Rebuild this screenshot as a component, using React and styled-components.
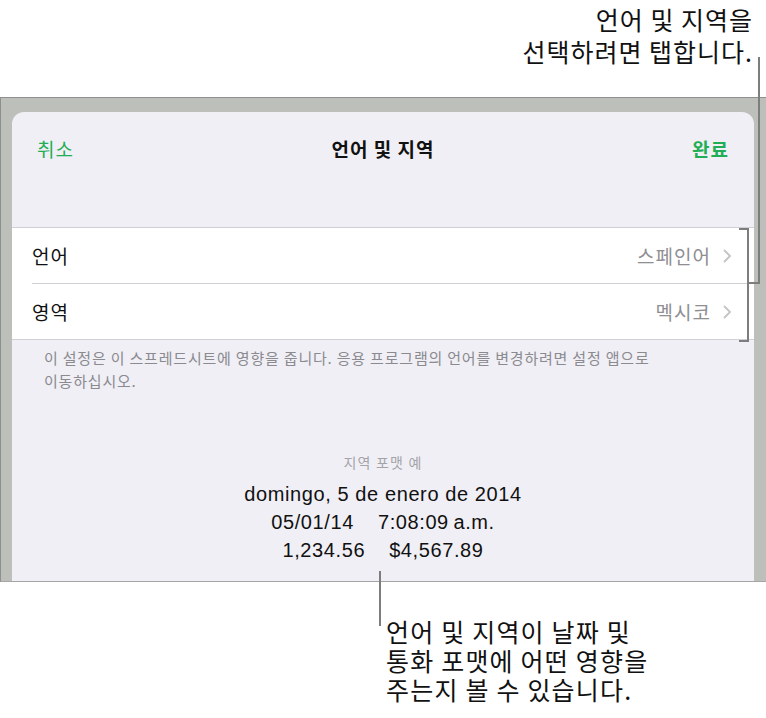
import React from "react";
import styled, { createGlobalStyle } from "styled-components";

const KR = `"Noto Sans CJK KR", "Noto Sans", sans-serif`;
const LATIN = `"Liberation Sans", "Noto Sans CJK KR", sans-serif`;
const GREEN = "#1fae55";
const LINE = "#7d7d7d";

const GlobalStyle = createGlobalStyle`
  html, body {
    margin: 0;
    padding: 0;
    background: #ffffff;
  }
  body {
    font-family: ${KR};
    color: #111;
  }
`;

const settings = [
  { label: "언어", value: "스페인어" },
  { label: "영역", value: "멕시코" },
];

const Chevron = () => (
  <svg width="9" height="14" viewBox="0 0 9 14">
    <polyline
      points="1.5,1.5 7,7 1.5,12.5"
      fill="none"
      stroke="#c4c4c8"
      strokeWidth="1.8"
      strokeLinecap="round"
      strokeLinejoin="round"
    />
  </svg>
);

const App = () => {
  return (
    <Page>
      <GlobalStyle />
      <TopNote>
        언어 및 지역을
        <br />
        선택하려면 탭합니다.
      </TopNote>

      <Frame>
        <Sheet>
          <NavBar>
            <NavButton>취소</NavButton>
            <NavTitle>언어 및 지역</NavTitle>
            <NavButton bold>완료</NavButton>
          </NavBar>

          <Group>
            {settings.map((item, index) => (
              <Row key={item.label} last={index === settings.length - 1}>
                <RowLabel>{item.label}</RowLabel>
                <RowValue>
                  {item.value}
                  <Chevron />
                </RowValue>
              </Row>
            ))}
          </Group>

          <FooterNote>
            이 설정은 이 스프레드시트에 영향을 줍니다. 응용 프로그램의 언어를 변경하려면 설정 앱으로
            <br />
            이동하십시오.
          </FooterNote>

          <Example>
            <ExampleCaption>지역 포맷 예</ExampleCaption>
            <ExampleLine>domingo, 5 de enero de 2014</ExampleLine>
            <ExampleLine>
              <span>05/01/14</span>
              <span>7:08:09{"\u2009"}a.m.</span>
            </ExampleLine>
            <ExampleLine>
              <span>1,234.56</span>
              <span>$4,567.89</span>
            </ExampleLine>
          </Example>
        </Sheet>
      </Frame>

      <BottomNote>
        언어 및 지역이 날짜 및
        <br />
        통화 포맷에 어떤 영향을
        <br />
        주는지 볼 수 있습니다.
      </BottomNote>

      {/* callout lines drawn over the screenshot */}
      <Bracket />
      <Leader style={{ left: 747, top: 282, width: 13, height: 2 }} />
      <Leader style={{ left: 758, top: 57, width: 2, height: 227 }} />
      <Leader style={{ left: 379, top: 571, width: 2, height: 55 }} />
    </Page>
  );
};

export default App;

const Page = styled.div`
  position: relative;
  width: 766px;
  height: 718px;
  overflow: hidden;
`;

const TopNote = styled.div`
  height: 97px;
  box-sizing: border-box;
  padding: 3px 13px 0 0;
  text-align: right;
  font-family: ${KR};
  font-size: 25px;
  line-height: 32px;
  letter-spacing: 1px;
  color: #111;
`;

const Frame = styled.div`
  height: 485px;
  box-sizing: border-box;
  padding: 14px 12px 0 11px;
  background: #bdbfbb;
  border-top: 1px solid #8f908e;
  border-left: 1px solid #8f908e;
  border-bottom: 1px solid #a6a7a5;
  display: flex;
`;

const Sheet = styled.div`
  flex: 1;
  background: #f0eff5;
  border-radius: 12px 12px 0 0;
  display: flex;
  flex-direction: column;
`;

const NavBar = styled.div`
  height: 72px;
  display: grid;
  grid-template-columns: 1fr auto 1fr;
  align-items: center;
  padding: 0 25px;
`;

const NavButton = styled.div`
  font-family: ${KR};
  font-size: 19px;
  letter-spacing: 1px;
  font-weight: ${(p) => (p.bold ? 700 : 400)};
  color: ${GREEN};
  justify-self: ${(p) => (p.bold ? "end" : "start")};
`;

const NavTitle = styled.div`
  font-family: ${KR};
  font-size: 19px;
  letter-spacing: 1px;
  font-weight: 700;
  color: #111;
`;

const Group = styled.div`
  margin-top: 43px;
  background: #ffffff;
  border-top: 1px solid #d0d0d5;
  border-bottom: 1px solid #d0d0d5;
  padding-left: 20px;
`;

const Row = styled.div`
  height: 55px;
  display: flex;
  align-items: center;
  justify-content: space-between;
  padding-right: 22px;
  border-bottom: ${(p) => (p.last ? "none" : "1px solid #d0d0d5")};
`;

const RowLabel = styled.span`
  font-family: ${KR};
  font-size: 19px;
  letter-spacing: 1px;
  color: #111;
`;

const RowValue = styled.span`
  display: flex;
  align-items: center;
  gap: 12px;
  font-family: ${KR};
  font-size: 19px;
  letter-spacing: 1px;
  color: #8e8e93;
`;

const FooterNote = styled.div`
  padding: 6px 20px 0 32px;
  font-family: ${KR};
  font-size: 15px;
  line-height: 23px;
  letter-spacing: 0.8px;
  color: #8a8a8f;
`;

const Example = styled.div`
  margin-top: 60px;
  display: flex;
  flex-direction: column;
  align-items: center;
`;

const ExampleCaption = styled.div`
  font-family: ${KR};
  font-size: 14px;
  letter-spacing: 1.2px;
  color: #a3a3a8;
  margin-bottom: 8px;
`;

const ExampleLine = styled.div`
  display: flex;
  gap: 24px;
  font-family: ${LATIN};
  font-size: 20px;
  line-height: 28px;
  letter-spacing: 0.6px;
  color: #111;
`;

const BottomNote = styled.div`
  padding: 35px 0 0 386px;
  font-family: ${KR};
  font-size: 25px;
  line-height: 29px;
  letter-spacing: 1.2px;
  color: #111;
`;

const Bracket = styled.div`
  position: absolute;
  left: 739px;
  top: 228px;
  width: 8px;
  height: 110px;
  border: 2px solid ${LINE};
  border-left: none;
`;

const Leader = styled.div`
  position: absolute;
  background: ${LINE};
`;
